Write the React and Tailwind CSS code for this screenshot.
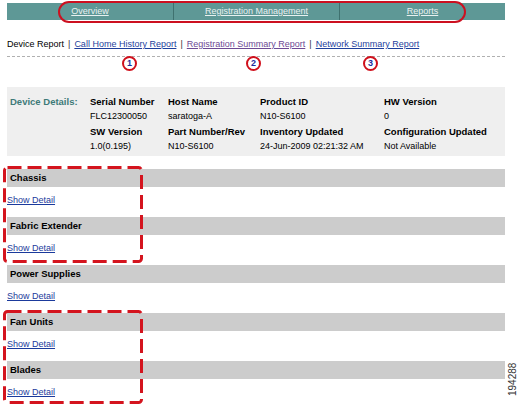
import React from "react";

const font = { fontFamily: '"Liberation Sans", Arial, sans-serif' };

function Circle({ n, x }) {
  return (
    <div
      className="absolute top-[56px] w-[15px] h-[15px] rounded-full border-2 border-[#d0101c] bg-white flex items-center justify-center text-[9px] font-bold text-[#1c2c9c] leading-none"
      style={{ left: x - 7 }}
    >
      {n}
    </div>
  );
}

function DashedBox({ top, height }) {
  return (
    <svg className="absolute left-[3px]" style={{ top }} width="141" height={height}>
      <rect
        x="1.5"
        y="1.5"
        width="137"
        height={height - 3}
        rx="3"
        fill="none"
        stroke="#d4141e"
        strokeWidth="3"
        strokeDasharray="14 6"
      />
    </svg>
  );
}

function Section({ title }) {
  return (
    <div className="flex flex-col">
      <div className="h-[18px] bg-[#cccccc] flex items-center pl-[3px] text-[9.5px] font-bold text-black">
        {title}
      </div>
      <div className="h-[30px] pt-[8px] leading-[11px]">
        <a href="#" className="text-[9px] text-[#1b3a9c] underline">Show Detail</a>
      </div>
    </div>
  );
}

export default function App() {
  const navItems = ["Overview", "Registration Management", "Reports"];
  return (
    <div className="relative w-[520px] h-[407px] bg-white overflow-hidden text-[9px] text-black" style={font}>
      <div className="pl-[7px] pr-[15px] pt-[3px]">
        {/* nav */}
        <div className="h-[17px] bg-[#5e9896] grid grid-cols-3">
          {navItems.map((t, i) => (
            <div
              key={t}
              className={`flex items-center justify-center ${i > 0 ? "border-l border-[#3f716f]" : ""}`}
            >
              <a href="#" className="text-[#e9f1f1] underline text-[9px]">{t}</a>
            </div>
          ))}
        </div>

        {/* report links */}
        <div className="mt-[19px] flex items-center h-[11px] leading-[11px] text-[9px] whitespace-nowrap">
          <span>Device Report</span>
          <span className="mx-[4px] text-[#333]">|</span>
          <a href="#" className="text-[#1f3f9c] underline">Call Home History Report</a>
          <span className="mx-[4px] text-[#333]">|</span>
          <a href="#" className="text-[#6d4a94] underline">Registration Summary Report</a>
          <span className="mx-[4px] text-[#333]">|</span>
          <a href="#" className="text-[#1f3f9c] underline">Network Summary Report</a>
        </div>
        <div className="mt-[6px] border-t border-dashed border-[#b0b0b0]" />

        {/* device details */}
        <div className="mt-[30px] h-[69px] bg-[#efefef] pl-[3px] pt-[7px] grid grid-cols-[80px_78px_92px_124px_1fr] auto-rows-[15px] items-center leading-[15px]">
          <div className="font-bold text-[9.5px] text-[#3e7a78]">Device Details:</div>
          <div className="font-bold text-[9.5px]">Serial Number</div>
          <div className="font-bold text-[9.5px]">Host Name</div>
          <div className="font-bold text-[9.5px]">Product ID</div>
          <div className="font-bold text-[9.5px]">HW Version</div>
          <div />
          <div>FLC12300050</div>
          <div>saratoga-A</div>
          <div>N10-S6100</div>
          <div>0</div>
          <div />
          <div className="font-bold text-[9.5px]">SW Version</div>
          <div className="font-bold text-[9.5px]">Part Number/Rev</div>
          <div className="font-bold text-[9.5px]">Inventory Updated</div>
          <div className="font-bold text-[9.5px]">Configuration Updated</div>
          <div />
          <div>1.0(0.195)</div>
          <div>N10-S6100</div>
          <div>24-Jun-2009 02:21:32 AM</div>
          <div>Not Available</div>
        </div>

        {/* sections */}
        <div className="mt-[13px] flex flex-col">
          <Section title="Chassis" />
          <Section title="Fabric Extender" />
          <Section title="Power Supplies" />
          <Section title="Fan Units" />
          <Section title="Blades" />
        </div>
      </div>

      {/* annotations */}
      <div className="absolute left-[58px] top-[1px] w-[408px] h-[22px] rounded-[11px] border-2 border-[#cc1020]" />
      <Circle n="1" x={129} />
      <Circle n="2" x={253} />
      <Circle n="3" x={370} />
      <DashedBox top={166} height={97} />
      <DashedBox top={310} height={94} />
      <div className="absolute left-[508px] top-[396px] w-0 h-0">
        <div className="origin-top-left -rotate-90 text-[10px] text-[#333] whitespace-nowrap leading-none">194288</div>
      </div>
    </div>
  );
}
